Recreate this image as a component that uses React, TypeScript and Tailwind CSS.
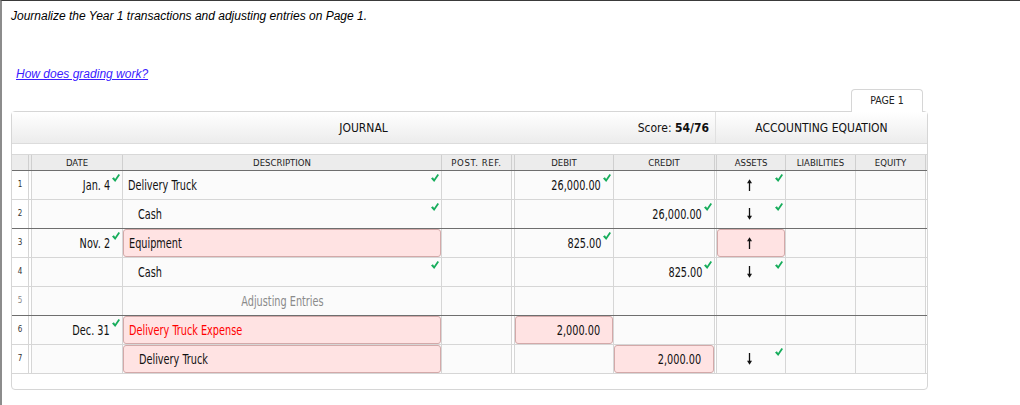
import React from "react";

type Row = {
    n: number;
    date?: string;
    dateOk?: boolean;
    desc?: string;
    indent?: boolean;
    descOk?: boolean;
    descBad?: boolean;
    red?: boolean;
    note?: string;
    debit?: string;
    debitOk?: boolean;
    debitBad?: boolean;
    credit?: string;
    creditOk?: boolean;
    creditBad?: boolean;
    assets?: "up" | "down";
    assetsOk?: boolean;
    assetsBad?: boolean;
    dark?: boolean;
};

const rows: Row[] = [
    {n: 1, date: "Jan. 4", dateOk: true, desc: "Delivery Truck", descOk: true, debit: "26,000.00", debitOk: true, assets: "up", assetsOk: true},
    {n: 2, desc: "Cash", indent: true, descOk: true, credit: "26,000.00", creditOk: true, assets: "down", assetsOk: true, dark: true},
    {n: 3, date: "Nov. 2", dateOk: true, desc: "Equipment", descBad: true, debit: "825.00", debitOk: true, assets: "up", assetsBad: true},
    {n: 4, desc: "Cash", indent: true, descOk: true, credit: "825.00", creditOk: true, assets: "down", assetsOk: true},
    {n: 5, note: "Adjusting Entries", dark: true},
    {n: 6, date: "Dec. 31", dateOk: true, desc: "Delivery Truck Expense", descBad: true, red: true, debit: "2,000.00", debitBad: true},
    {n: 7, desc: "Delivery Truck", indent: true, descBad: true, credit: "2,000.00", creditBad: true, assets: "down", assetsOk: true},
];

const cols = "grid grid-cols-[17px_94px_319px_70px_102px_101px_71px_70px_70px]";
const narrow = "font-['Liberation_Sans_Narrow','DejaVu_Sans_Condensed','Liberation_Sans',sans-serif]";

const Check = () => (
    <svg width="8" height="8" viewBox="0 0 8 8" className="absolute top-[3px] right-[2px]">
        <path d="M0 4.5 L1.9 3.2 L3.1 4.9 L6.5 0 L8 1.1 L3.2 7.9 Z" fill="#17ad5c"/>
    </svg>
);

const Arrow = ({dir}: {dir: "up" | "down"}) => (
    <svg width="7" height="12" viewBox="0 0 7 12" className={dir === "down" ? "rotate-180" : ""}>
        <path d="M3.5 3 V12" stroke="#111" strokeWidth="1.3"/>
        <path d="M1 4.2 L3.5 0.2 L6 4.2 Z" fill="#111"/>
    </svg>
);

// one journal cell, optional pink "wrong" box and green check
const Cell = ({value, ok, bad, align = "right", pad = "pr-[12px]", className = "", textClass = "text-[#111]", arrow}: {
    value?: string; ok?: boolean; bad?: boolean; align?: "left" | "right" | "center"; pad?: string; className?: string; textClass?: string; arrow?: "up" | "down";
}) => {
    const justify = align === "right" ? "justify-end" : align === "center" ? "justify-center" : "justify-start";
    const origin = align === "right" ? "origin-right" : align === "center" ? "origin-center" : "origin-left";
    const text = arrow ? <Arrow dir={arrow}/> : value ? (
        <span className={`inline-block whitespace-nowrap scale-x-[0.8] ${origin}`}>{value}</span>
    ) : null;
    return (
        <div className={`relative h-full border-r border-[#d6d6d6] bg-[#fbfbfb] ${className}`}>
            {bad ? (
                <div className={`flex items-center h-full w-full rounded-[3px] border border-[#d3a9a9] bg-[#ffe3e3] ${justify} ${pad} ${textClass}`}>
                    {text}
                </div>
            ) : (
                <div className={`flex items-center h-full ${justify} ${pad} ${textClass}`}>{text}</div>
            )}
            {ok && <Check/>}
        </div>
    );
};

export default function App() {
    return (
        <div className="w-[1020px] h-[405px] overflow-hidden bg-white border-t border-t-[#3a3a3a] border-l-2 border-l-[#8c8c8c]">
            <p className="mt-[8px] pl-[9px] text-[12px] leading-[14px] italic text-black font-['Liberation_Sans',Arial,sans-serif]">
                Journalize the Year 1 transactions and adjusting entries on Page 1.
            </p>
            <a href="#" className="block mt-[44px] ml-[14px] w-fit text-[12px] leading-[14px] italic underline text-[#3b1cff] font-['Liberation_Sans',Arial,sans-serif]">
                How does grading work?
            </a>

            <div className={`ml-[9px] w-[917px] mt-[8px] ${narrow}`}>
                {/* Page tab */}
                <div className="flex justify-end pr-[5px]">
                    <div className="relative z-10 -mb-px w-[72px] h-[23px] flex items-center justify-center rounded-t-[4px] border border-b-0 border-[#d6d6d6] bg-white text-[10.5px] text-[#222]">
                        PAGE 1
                    </div>
                </div>

                <div className="h-[279px] rounded-[4px] border border-[#d6d6d6] bg-white">
                    {/* Header bar */}
                    <div className="flex h-[32px] border-b border-[#dcdcdc] bg-gradient-to-b from-[#ffffff] to-[#ececec] text-[12px] text-[#111]">
                        <div className="w-[703px] grid grid-cols-[1fr_auto_1fr] items-center">
                            <span/>
                            <span>JOURNAL</span>
                            <span className="justify-self-end pr-[6px]">Score: <b>54/76</b></span>
                        </div>
                        <div className="flex-1 flex items-center justify-center border-l border-[#e0e0e0]">
                            ACCOUNTING EQUATION
                        </div>
                    </div>

                    {/* Column headings */}
                    <div className={`${cols} mt-[10px] h-[17px] border-y border-t-[#d8d8d8] border-b-[#6e6e6e] bg-[#ececec] text-[9.5px] text-[#222] text-center leading-[15px]`}>
                        <div className="border-r border-[#cfcfcf]"/>
                        <div className="ml-[2px] border-x border-[#cfcfcf]">DATE</div>
                        <div className="border-r border-[#cfcfcf]">DESCRIPTION</div>
                        <div className="border-r border-[#cfcfcf] tracking-[0.6px]">POST. REF.</div>
                        <div className="ml-[2px] border-x border-[#cfcfcf]">DEBIT</div>
                        <div className="border-r border-[#cfcfcf]">CREDIT</div>
                        <div className="ml-[1px] border-x border-[#cfcfcf]">ASSETS</div>
                        <div className="border-r border-[#cfcfcf]">LIABILITIES</div>
                        <div className="border-r border-[#cfcfcf]">EQUITY</div>
                    </div>

                    {rows.map((r) => (
                        <div key={r.n}
                             className={`${cols} h-[29px] border-b text-[13.5px] ${r.dark ? "border-[#6e6e6e]" : "border-[#d6d6d6]"}`}>
                            <div className={`flex items-center justify-center border-r border-[#d6d6d6] bg-white text-[8px] ${r.n === 5 ? "text-[#888]" : "text-[#333]"}`}>
                                {r.n}
                            </div>
                            <Cell value={r.date} ok={r.dateOk} className="ml-[2px] border-l"/>
                            {r.note ? (
                                <Cell value={r.note} align="center" pad="" textClass="text-[#8a8a8a]"/>
                            ) : (
                                <Cell value={r.desc} ok={r.descOk} bad={r.descBad} align="left"
                                      pad={r.indent ? "pl-[15px]" : "pl-[5px]"}
                                      textClass={r.red ? "text-[#ff0000]" : "text-[#111]"}/>
                            )}
                            <Cell/>
                            <Cell value={r.debit} ok={r.debitOk} bad={r.debitBad} className="ml-[2px] border-l"/>
                            <Cell value={r.credit} ok={r.creditOk} bad={r.creditBad}/>
                            <Cell arrow={r.assets} ok={r.assetsOk} bad={r.assetsBad} align="center" pad="pr-[4px]" className="ml-[1px] border-l"/>
                            <Cell/>
                            <Cell/>
                        </div>
                    ))}
                </div>
            </div>
        </div>
    );
}
